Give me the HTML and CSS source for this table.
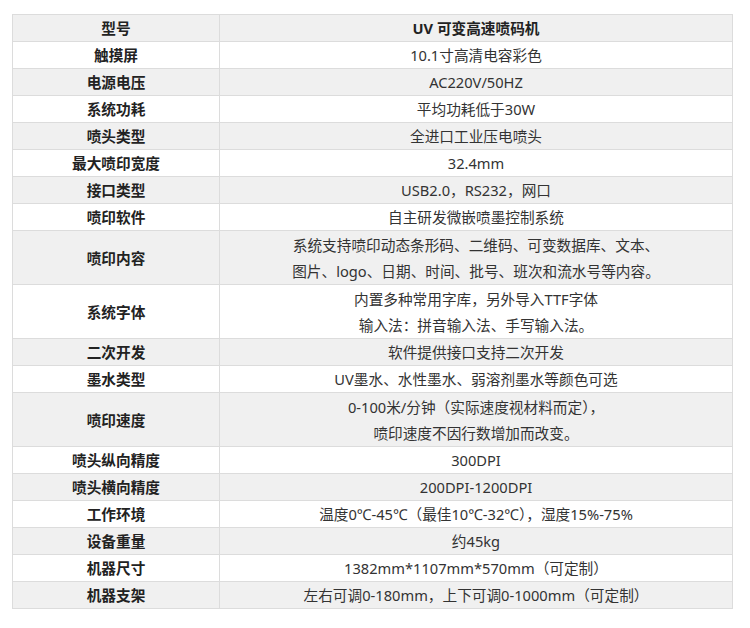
FILE: index.html
```html
<!DOCTYPE html>
<html lang="zh-CN">
<head>
<meta charset="utf-8">
<title>UV 可变高速喷码机 参数</title>
<link rel="stylesheet" href="styles.css">
</head>
<body>
<div class="page">
<table class="spec">
  <tbody>
    <tr class="head"><th>型号</th><th>UV 可变高速喷码机</th></tr>
    <tr><th>触摸屏</th><td>10.1寸高清电容彩色</td></tr>
    <tr class="alt"><th>电源电压</th><td>AC220V/50HZ</td></tr>
    <tr><th>系统功耗</th><td>平均功耗低于30W</td></tr>
    <tr class="alt"><th>喷头类型</th><td>全进口工业压电喷头</td></tr>
    <tr><th>最大喷印宽度</th><td>32.4mm</td></tr>
    <tr class="alt"><th>接口类型</th><td>USB2.0，RS232，网口</td></tr>
    <tr><th>喷印软件</th><td>自主研发微嵌喷墨控制系统</td></tr>
    <tr class="alt two"><th>喷印内容</th><td>系统支持喷印动态条形码、二维码、可变数据库、文本、<br>图片、logo、日期、时间、批号、班次和流水号等内容。</td></tr>
    <tr class="two"><th>系统字体</th><td>内置多种常用字库，另外导入TTF字体<br>输入法：拼音输入法、手写输入法。</td></tr>
    <tr class="alt"><th>二次开发</th><td>软件提供接口支持二次开发</td></tr>
    <tr><th>墨水类型</th><td>UV墨水、水性墨水、弱溶剂墨水等颜色可选</td></tr>
    <tr class="alt two"><th>喷印速度</th><td>0-100米/分钟（实际速度视材料而定），<br>喷印速度不因行数增加而改变。</td></tr>
    <tr><th>喷头纵向精度</th><td>300DPI</td></tr>
    <tr class="alt"><th>喷头横向精度</th><td>200DPI-1200DPI</td></tr>
    <tr><th>工作环境</th><td>温度0℃-45℃（最佳10℃-32℃），湿度15%-75%</td></tr>
    <tr class="alt"><th>设备重量</th><td>约45kg</td></tr>
    <tr><th>机器尺寸</th><td>1382mm*1107mm*570mm（可定制）</td></tr>
    <tr class="alt"><th>机器支架</th><td>左右可调0-180mm，上下可调0-1000mm（可定制）</td></tr>
  </tbody>
</table>
</div>
</body>
</html>
```

FILE: styles.css
```css
html, body {
  margin: 0;
  padding: 0;
  background: #ffffff;
}

.page {
  padding: 14px 0 0 12px;
}

.spec {
  border-collapse: collapse;
  width: 721px;
  table-layout: fixed;
  font-family: "Noto Sans", "Noto Sans CJK SC", sans-serif;
  font-size: 14.67px;
  color: #333333;
}

.spec th,
.spec td {
  border: 1px solid #dcdcdc;
  padding: 0;
  height: 26px;
  line-height: 26px;
  text-align: center;
  vertical-align: middle;
  white-space: nowrap;
}

.spec th {
  width: 206px;
  font-weight: bold;
  color: #222222;
}

.spec td {
  font-weight: normal;
}

.spec .head th {
  background: #f0f0f0;
}

.spec .head th + th {
  width: auto;
}

.spec .alt th,
.spec .alt td {
  background: #f0f0f0;
}

.spec .two th,
.spec .two td {
  height: 53px;
}
```
